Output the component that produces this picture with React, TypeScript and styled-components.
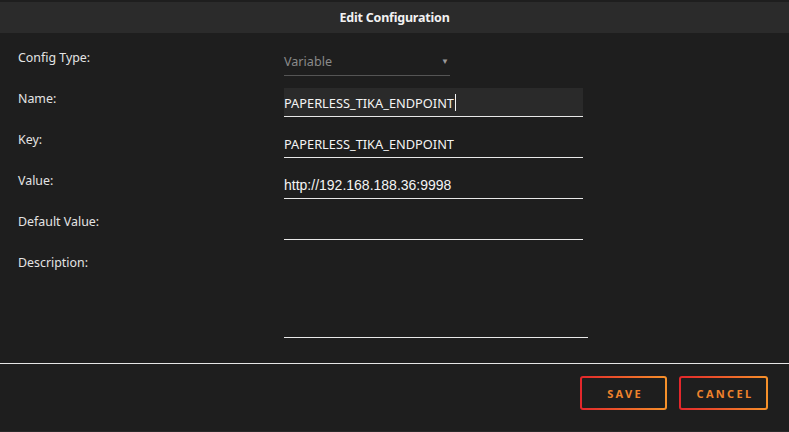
import styled, { createGlobalStyle } from "styled-components";

const GlobalStyle = createGlobalStyle`
  html, body {
    margin: 0;
    padding: 0;
    background: #1e1e1e;
  }
  body {
    font-family: "Noto Sans", "Open Sans", sans-serif;
  }
`;

const Dialog = styled.div`
  width: 789px;
  height: 432px;
  background: #1e1e1e;
  padding-top: 2px;
  box-sizing: border-box;
  display: flex;
  flex-direction: column;
  border-bottom: 1px solid #2a2a2a;
`;

const Header = styled.header`
  height: 31px;
  background: #2b2b2b;
  display: flex;
  justify-content: center;
  align-items: center;
`;

const Title = styled.h1`
  margin: 0;
  font-size: 12.5px;
  font-weight: 700;
  color: #f2f2f2;
  letter-spacing: -0.2px;
`;

const Form = styled.div`
  padding: 14px 0 0 18px;
  display: flex;
  flex-direction: column;
  gap: 12px;
`;

const Row = styled.div`
  display: flex;
  align-items: flex-start;
`;

const Label = styled.label`
  width: 266px;
  padding-top: 3px;
  font-size: 12.4px;
  line-height: 16px;
  color: #e4e4e4;
`;

const Select = styled.div`
  width: 166px;
  height: 29px;
  box-sizing: border-box;
  border-bottom: 1px solid #555;
  display: flex;
  align-items: center;
  justify-content: space-between;
  padding-top: 1px;
  font-size: 12.6px;
  color: #8a8a8a;
`;

const Arrow = styled.span`
  font-size: 8px;
  color: #9a9a9a;
  margin-right: 1px;
  margin-top: -3px;
`;

const Field = styled.div<{ $filled?: boolean; $mono?: boolean }>`
  width: 299px;
  height: 29px;
  box-sizing: border-box;
  border-bottom: 1px solid #e8e8e8;
  background: ${(p) => (p.$filled ? "#2a2a2a" : "transparent")};
  display: flex;
  align-items: center;
  padding-top: 1px;
  font-family: ${(p) =>
    p.$mono ? '"Liberation Sans", Arial, sans-serif' : '"Noto Sans", sans-serif'};
  font-size: ${(p) => (p.$mono ? "14px" : "12.8px")};
  color: #f4f4f4;
`;

const Caret = styled.span`
  display: inline-block;
  width: 1px;
  height: 17px;
  background: #f4f4f4;
  margin-left: 1px;
`;

const TextArea = styled.div`
  width: 304px;
  height: 86px;
  box-sizing: border-box;
  border-bottom: 1px solid #e8e8e8;
`;

const Divider = styled.hr`
  margin: 25px 0 0;
  border: none;
  height: 1px;
  background: #e6e6e6;
`;

const Footer = styled.footer`
  display: flex;
  justify-content: flex-end;
  gap: 12px;
  padding: 12px 21px 0 0;
`;

const Button = styled.button<{ $w: number }>`
  width: ${(p) => p.$w}px;
  height: 34px;
  border: 2px solid transparent;
  border-radius: 3px;
  background:
    linear-gradient(#1e1e1e, #1e1e1e) padding-box,
    linear-gradient(90deg, #e3262b, #f7922a) border-box;
  font-family: "Noto Sans", sans-serif;
  font-size: 11px;
  font-weight: 700;
  letter-spacing: 2.3px;
  color: #f0832c;
  padding: 0 0 0 3px;
  cursor: pointer;
`;

export default function App() {
  return (
    <>
      <GlobalStyle />
      <Dialog>
        <Header>
          <Title>Edit Configuration</Title>
        </Header>
        <Form>
          <Row>
            <Label>Config Type:</Label>
            <Select>
              <span>Variable</span>
              <Arrow>▼</Arrow>
            </Select>
          </Row>
          <Row>
            <Label>Name:</Label>
            <Field $filled>
              PAPERLESS_TIKA_ENDPOINT
              <Caret />
            </Field>
          </Row>
          <Row>
            <Label>Key:</Label>
            <Field>PAPERLESS_TIKA_ENDPOINT</Field>
          </Row>
          <Row>
            <Label>Value:</Label>
            <Field $mono>http://192.168.188.36:9998</Field>
          </Row>
          <Row>
            <Label>Default Value:</Label>
            <Field />
          </Row>
          <Row>
            <Label>Description:</Label>
            <TextArea />
          </Row>
        </Form>
        <Divider />
        <Footer>
          <Button $w={87}>SAVE</Button>
          <Button $w={89}>CANCEL</Button>
        </Footer>
      </Dialog>
    </>
  );
}
